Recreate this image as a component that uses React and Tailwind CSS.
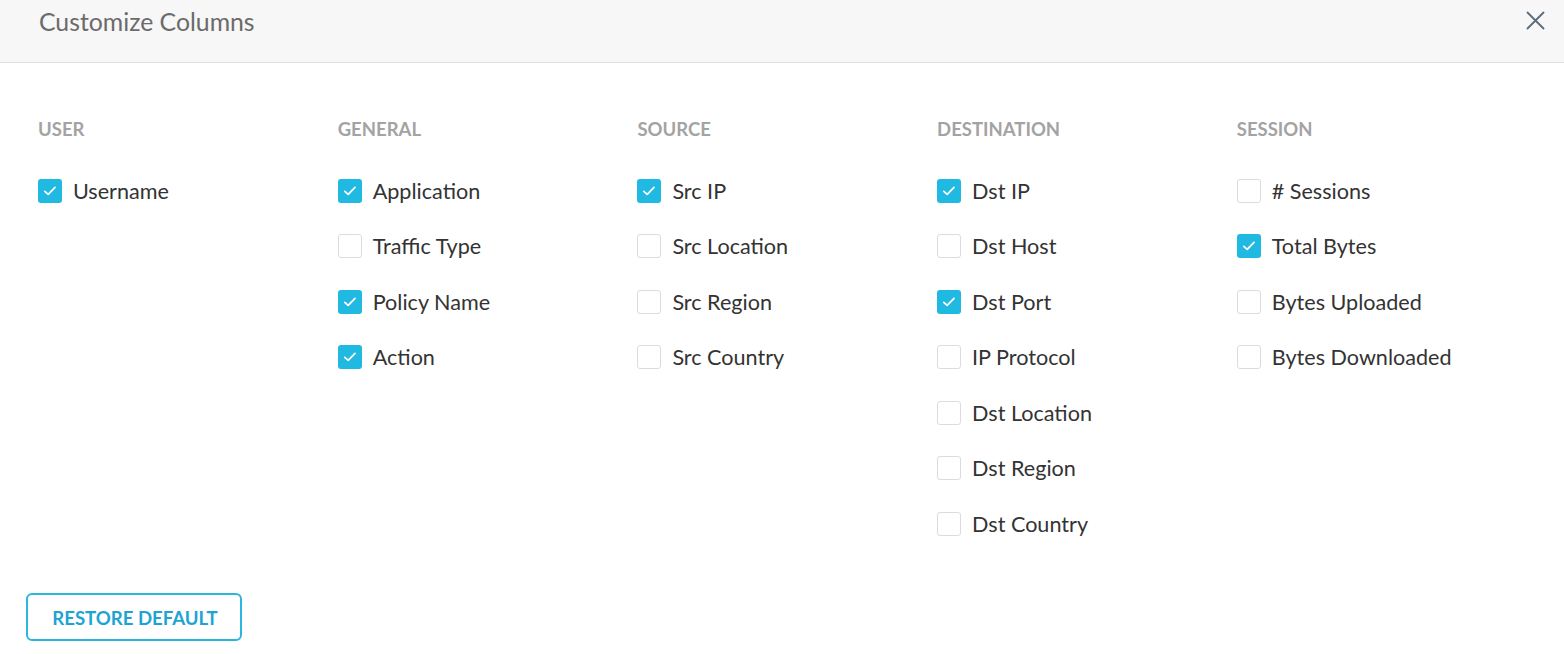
import { useState } from 'react'

const COLUMNS = [
  { title: 'USER', items: [['Username', true]] },
  {
    title: 'GENERAL',
    items: [
      ['Application', true],
      ['Traffic Type', false],
      ['Policy Name', true],
      ['Action', true],
    ],
  },
  {
    title: 'SOURCE',
    items: [
      ['Src IP', true],
      ['Src Location', false],
      ['Src Region', false],
      ['Src Country', false],
    ],
  },
  {
    title: 'DESTINATION',
    items: [
      ['Dst IP', true],
      ['Dst Host', false],
      ['Dst Port', true],
      ['IP Protocol', false],
      ['Dst Location', false],
      ['Dst Region', false],
      ['Dst Country', false],
    ],
  },
  {
    title: 'SESSION',
    items: [
      ['# Sessions', false],
      ['Total Bytes', true],
      ['Bytes Uploaded', false],
      ['Bytes Downloaded', false],
    ],
  },
]

function Checkbox({ checked, onChange }) {
  return (
    <button
      onClick={onChange}
      className={
        checked
          ? 'w-6 h-6 rounded-[3px] bg-[#1fb9e1] flex items-center justify-center shrink-0'
          : 'w-6 h-6 rounded-[3px] bg-white border border-[#dcdcdc] shrink-0'
      }
    >
      {checked && (
        <svg width="16" height="16" viewBox="0 0 16 16" fill="none">
          <path d="M2.8 8.4 L6.2 11.4 L13 4.4" stroke="white" strokeWidth="1.8" strokeLinecap="round" strokeLinejoin="round" />
        </svg>
      )}
    </button>
  )
}

export default function App() {
  const [state, setState] = useState(() =>
    COLUMNS.map((c) => c.items.map(([, v]) => v))
  )

  const toggle = (ci, ii) =>
    setState((s) => s.map((col, i) => (i === ci ? col.map((v, j) => (j === ii ? !v : v)) : col)))

  return (
    <div className="w-[1564px] h-[654px] bg-white font-['Lato',sans-serif] flex flex-col">
      <div className="h-[63px] bg-[#f7f7f7] border-b border-[#e2e2e2] flex items-start justify-between pl-[39px] pr-[19px] shrink-0">
        <h2 className="text-[24.8px] leading-[30px] mt-[7px] text-[#6b6b6b]">Customize Columns</h2>
        <button className="mt-[11px] text-[#5b6b7b]">
          <svg width="19" height="19" viewBox="0 0 19 19" fill="none">
            <path d="M1.5 1.5 L17.5 17.5 M17.5 1.5 L1.5 17.5" stroke="currentColor" strokeWidth="1.8" strokeLinecap="round" />
          </svg>
        </button>
      </div>

      <div className="flex pl-[38px] pt-[55px]">
        {COLUMNS.map((col, ci) => (
          <div key={col.title} className="w-[299.7px]">
            <div className="text-[18.5px] leading-[22px] font-bold text-[#a3a3a3]">{col.title}</div>
            <div className="mt-[23px]">
              {col.items.map(([label], ii) => (
                <label key={label} className="h-[55.5px] flex items-center gap-[11px] cursor-pointer">
                  <Checkbox checked={state[ci][ii]} onChange={() => toggle(ci, ii)} />
                  <span className="text-[21.6px] leading-[26px] text-[#333333]">{label}</span>
                </label>
              ))}
            </div>
          </div>
        ))}
      </div>

      <div className="flex-1" />
      <div className="pl-[26px] pb-[13px]">
        <button className="w-[216px] h-[48px] pt-[3px] pl-[2px] rounded-[6px] border-2 border-[#2bb6e0] text-[#1da4d4] font-bold text-[18.6px]">
          RESTORE DEFAULT
        </button>
      </div>
    </div>
  )
}
